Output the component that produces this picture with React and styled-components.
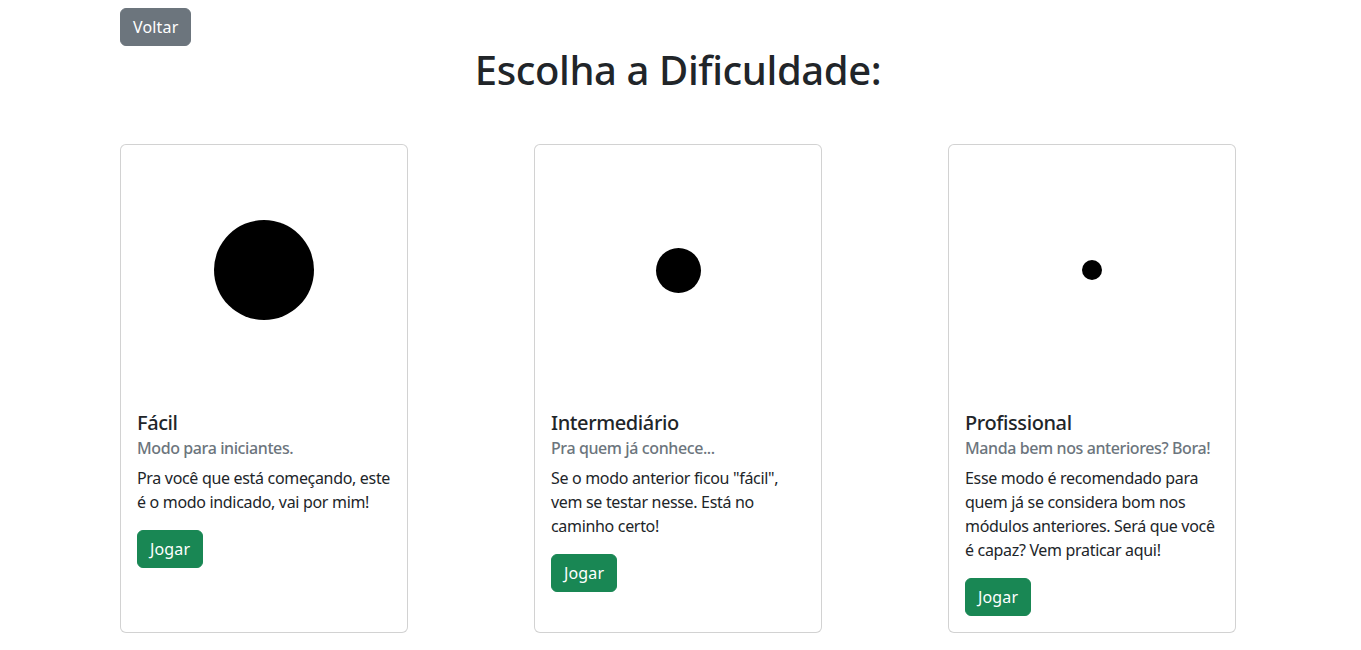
import React from "react";
import styled, { createGlobalStyle } from "styled-components";

const Global = createGlobalStyle`
  * { box-sizing: border-box; }
  body {
    margin: 0;
    background: #fff;
    color: #212529;
    font-family: "Noto Sans", "Open Sans", sans-serif;
    font-size: 16px;
    line-height: 1.5;
  }
`;

const Page = styled.div`
  width: 1116px;
  margin-left: 120px;
  padding-top: 8px;
`;

const Button = styled.button`
  display: inline-block;
  font-family: inherit;
  font-size: 16px;
  line-height: 24px;
  padding: 6px 12px;
  border: 1px solid ${(p) => p.$bg};
  border-radius: 6px;
  background: ${(p) => p.$bg};
  color: #fff;
  cursor: pointer;
  letter-spacing: 0.01em;
`;

const Heading = styled.h1`
  margin: 0;
  text-align: center;
  font-size: 40px;
  line-height: 48px;
  font-weight: 500;
  letter-spacing: -0.01em;
`;

const Row = styled.div`
  margin-top: 50px;
  display: grid;
  grid-template-columns: repeat(3, 288px);
  justify-content: space-between;
  align-items: stretch;
`;

const Card = styled.div`
  display: flex;
  flex-direction: column;
  border: 1px solid rgba(0, 0, 0, 0.175);
  border-radius: 6px;
  background: #fff;
`;

const ImageArea = styled.div`
  height: 250px;
  display: flex;
  align-items: center;
  justify-content: center;
`;

const Dot = styled.div`
  width: ${(p) => p.$size}px;
  height: ${(p) => p.$size}px;
  border-radius: 50%;
  background: #000;
`;

const Body = styled.div`
  padding: 16px;
  flex: 1;
`;

const Title = styled.h5`
  margin: 0 0 8px;
  font-size: 20px;
  line-height: 24px;
  font-weight: 500;
  letter-spacing: -0.02em;
`;

const Subtitle = styled.h6`
  margin: -4px 0 8px;
  font-size: 16px;
  line-height: 19.2px;
  font-weight: 500;
  color: #6c757d;
  letter-spacing: -0.025em;
`;

const Text = styled.p`
  margin: 0 0 16px;
  font-size: 16px;
  line-height: 24px;
  letter-spacing: -0.02em;
`;

const modes = [
  {
    size: 100,
    title: "Fácil",
    subtitle: "Modo para iniciantes.",
    text: "Pra você que está começando, este é o modo indicado, vai por mim!",
  },
  {
    size: 45,
    title: "Intermediário",
    subtitle: "Pra quem já conhece...",
    text: 'Se o modo anterior ficou "fácil", vem se testar nesse. Está no caminho certo!',
  },
  {
    size: 20,
    title: "Profissional",
    subtitle: "Manda bem nos anteriores? Bora!",
    text: "Esse modo é recomendado para quem já se considera bom nos módulos anteriores. Será que você é capaz? Vem praticar aqui!",
  },
];

export default function App() {
  return (
    <>
      <Global />
      <Page>
        <Button $bg="#6c757d">Voltar</Button>
        <Heading>Escolha a Dificuldade:</Heading>
        <Row>
          {modes.map((m) => (
            <Card key={m.title}>
              <ImageArea>
                <Dot $size={m.size} />
              </ImageArea>
              <Body>
                <Title>{m.title}</Title>
                <Subtitle>{m.subtitle}</Subtitle>
                <Text>{m.text}</Text>
                <Button $bg="#198754">Jogar</Button>
              </Body>
            </Card>
          ))}
        </Row>
      </Page>
    </>
  );
}
